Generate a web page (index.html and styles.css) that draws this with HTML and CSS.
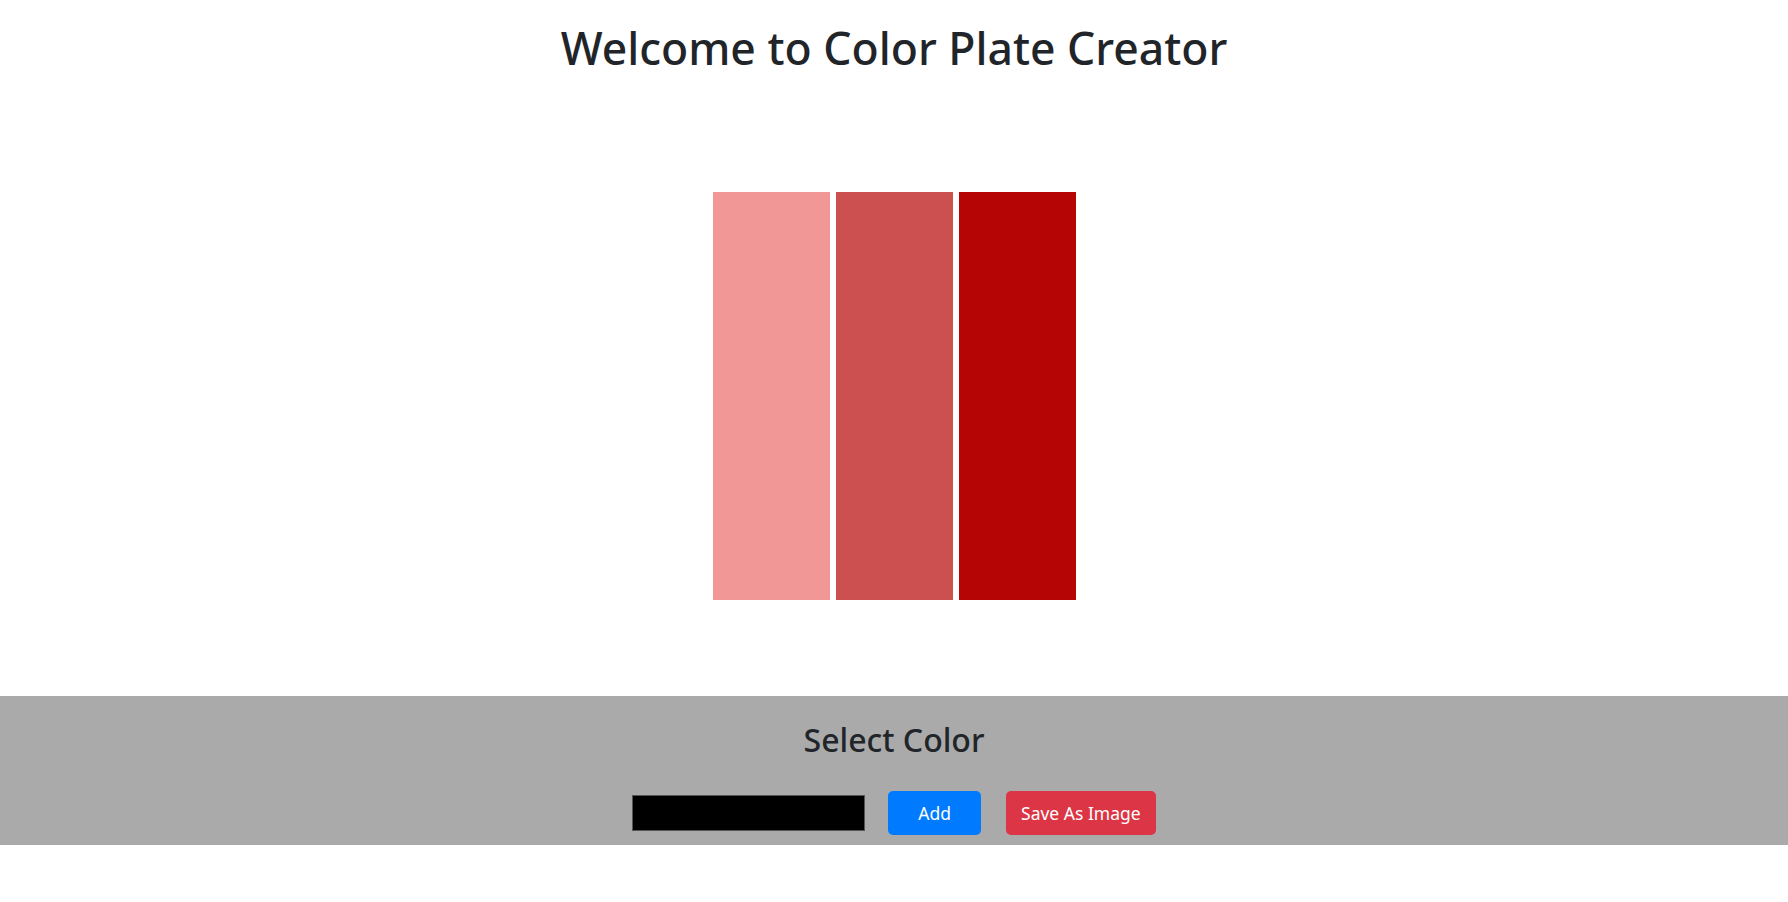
FILE: index.html
```html
<!DOCTYPE html>
<html lang="en">
<head>
<meta charset="utf-8">
<title>Color Plate Creator</title>
<link rel="stylesheet" href="styles.css">
</head>
<body>
  <header class="header">
    <h1 class="title">Welcome to Color Plate Creator</h1>
  </header>
  <main class="plate-area">
    <div class="plate">
      <div class="swatch swatch-light"></div>
      <div class="swatch swatch-mid"></div>
      <div class="swatch swatch-dark"></div>
    </div>
  </main>
  <section class="controls">
    <h3 class="controls-title">Select Color</h3>
    <div class="controls-row">
      <span class="color-input" role="textbox" aria-label="color"></span>
      <button class="btn btn-add" type="button">Add</button>
      <button class="btn btn-save" type="button">Save As Image</button>
    </div>
  </section>
</body>
</html>
```
FILE: styles.css
```css
* { box-sizing: border-box; }
html, body { margin: 0; padding: 0; background: #fff; }
body {
  font-family: "Noto Sans", "Open Sans", sans-serif;
  color: #212529;
}
.header {
  display: flex;
  justify-content: center;
  padding-top: 20px;
}
.title {
  margin: 0;
  font-size: 44.5px;
  font-weight: 500;
  line-height: 55px;
  color: #212529;
}
.plate-area {
  display: flex;
  justify-content: center;
  padding-top: 117px;
  padding-bottom: 96px;
}
.plate {
  display: flex;
  gap: 6px;
}
.swatch {
  width: 117px;
  height: 408px;
}
.swatch-light { background: #f19795; }
.swatch-mid { background: #cc5050; }
.swatch-dark { background: #b50505; }
.controls {
  background: #aaaaaa;
  padding: 25px 0 10px;
  display: flex;
  flex-direction: column;
  align-items: center;
}
.controls-title {
  margin: 0 0 32px;
  font-size: 32px;
  font-weight: 500;
  line-height: 38px;
  color: #212529;
}
.controls-row {
  display: flex;
  align-items: center;
}
.color-input {
  display: block;
  width: 233px;
  height: 36px;
  background: #000;
  border: 1px solid #555;
}
.btn {
  height: 44px;
  border: 1px solid transparent;
  border-radius: 5px;
  color: #fff;
  font-family: inherit;
  font-size: 17.5px;
  line-height: 1.5;
  cursor: pointer;
}
.btn-add {
  margin-left: 23px;
  padding: 0 29px;
  background: #007bff;
}
.btn-save {
  margin-left: 25px;
  padding: 0 14px;
  background: #dc3545;
}
```
